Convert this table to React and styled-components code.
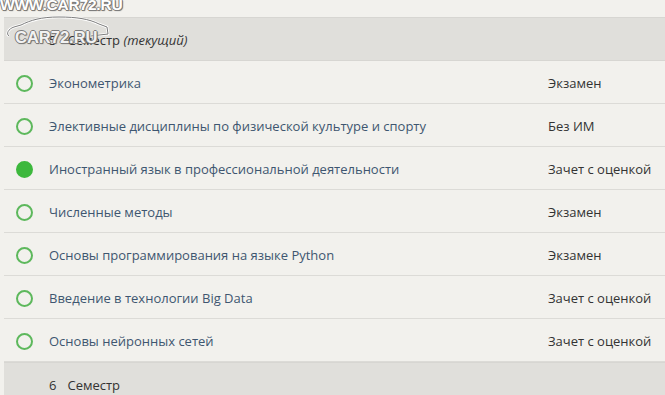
import React from "react";
import styled, { createGlobalStyle } from "styled-components";

const subjects = [
  { name: "Эконометрика", type: "Экзамен" },
  { name: "Элективные дисциплины по физической культуре и спорту", type: "Без ИМ" },
  { name: "Иностранный язык в профессиональной деятельности", type: "Зачет с оценкой", done: true },
  { name: "Численные методы", type: "Экзамен" },
  { name: "Основы программирования на языке Python", type: "Экзамен" },
  { name: "Введение в технологии Big Data", type: "Зачет с оценкой" },
  { name: "Основы нейронных сетей", type: "Зачет с оценкой" },
];

const carPath =
  "M4 22 C1 20 3 15 9 13 L16 11 C26 6 36 3 54 3 C72 3 84 5 94 10 L102 13 L103 20 L86 22";

export const App = () => {
  return (
    <>
      <GlobalStyle />
      <Page>
        <TopGap />
        <Semester>
          <span>5</span>
          <span>
            Семестр <Current>(текущий)</Current>
          </span>
        </Semester>
        {subjects.map((s) => (
          <Row key={s.name}>
            <Mark>
              <Circle $done={s.done} />
            </Mark>
            <Name>{s.name}</Name>
            <Type>{s.type}</Type>
          </Row>
        ))}
        <Semester>
          <span>6</span>
          <span>Семестр</span>
        </Semester>
        <Watermark>
          <Site>WWW.CAR72.RU</Site>
          <Logo>
            <svg width="106" height="26" viewBox="0 0 106 26">
              <path d={carPath} fill="none" stroke="#fff" strokeWidth="2.6" />
              <path d={carPath} fill="none" stroke="#7d7d7d" strokeWidth="1" />
            </svg>
            <LogoText>CAR72.RU</LogoText>
          </Logo>
        </Watermark>
      </Page>
    </>
  );
};

export default App;

const GlobalStyle = createGlobalStyle`
  body {
    margin: 0;
    background: #f2f1ed;
    font-family: "Open Sans", "Noto Sans", sans-serif;
  }
`;

const Page = styled.div`
  position: relative;
  width: 665px;
  height: 395px;
  overflow: hidden;
  background: #f2f1ed;
  font-size: 13px;
`;

const TopGap = styled.div`
  height: 17px;
`;

const Semester = styled.div`
  box-sizing: border-box;
  display: flex;
  gap: 11px;
  align-items: center;
  height: 44px;
  margin-left: 4px;
  padding: 2px 0 0 45px;
  background: #e0dfdb;
  border-top: 1px solid #d7d6d2;
  border-bottom: 1px solid #d7d6d2;
  color: #333;
`;

const Current = styled.i`
  font-style: italic;
`;

const Row = styled.div`
  box-sizing: border-box;
  display: grid;
  grid-template-columns: 45px 499px 117px;
  align-items: center;
  height: 43px;
  margin-left: 4px;
  padding-top: 2px;
  border-bottom: 1px solid #dcdbd7;
  &:last-of-type {
    border-bottom: none;
  }
`;

const Mark = styled.div`
  display: flex;
  padding-left: 12px;
`;

const Circle = styled.div`
  box-sizing: border-box;
  width: 17px;
  height: 17px;
  border-radius: 50%;
  border: 2px solid ${(p) => (p.$done ? "#3db83d" : "#5db85c")};
  background: ${(p) => (p.$done ? "#3db83d" : "transparent")};
`;

const Name = styled.div`
  color: #3e5670;
  white-space: nowrap;
`;

const Type = styled.div`
  color: #333;
  white-space: nowrap;
`;

const Watermark = styled.div`
  position: absolute;
  top: -4px;
  left: 0;
  pointer-events: none;
  font-family: "Liberation Sans", sans-serif;
  font-weight: bold;
  color: #fff;
  text-shadow: 1px 0 0 #7d7d7d, -1px 0 0 #7d7d7d, 0 1px 0 #7d7d7d,
    0 -1px 0 #7d7d7d, 1px 1px 1px #666;
`;

const Site = styled.div`
  font-size: 15.5px;
  letter-spacing: -0.2px;
`;

const Logo = styled.div`
  position: relative;
  margin-left: 5px;
`;

const LogoText = styled.div`
  position: absolute;
  left: 10px;
  top: 14px;
  font-size: 16.5px;
  color: rgba(255, 255, 255, 0.92);
`;
